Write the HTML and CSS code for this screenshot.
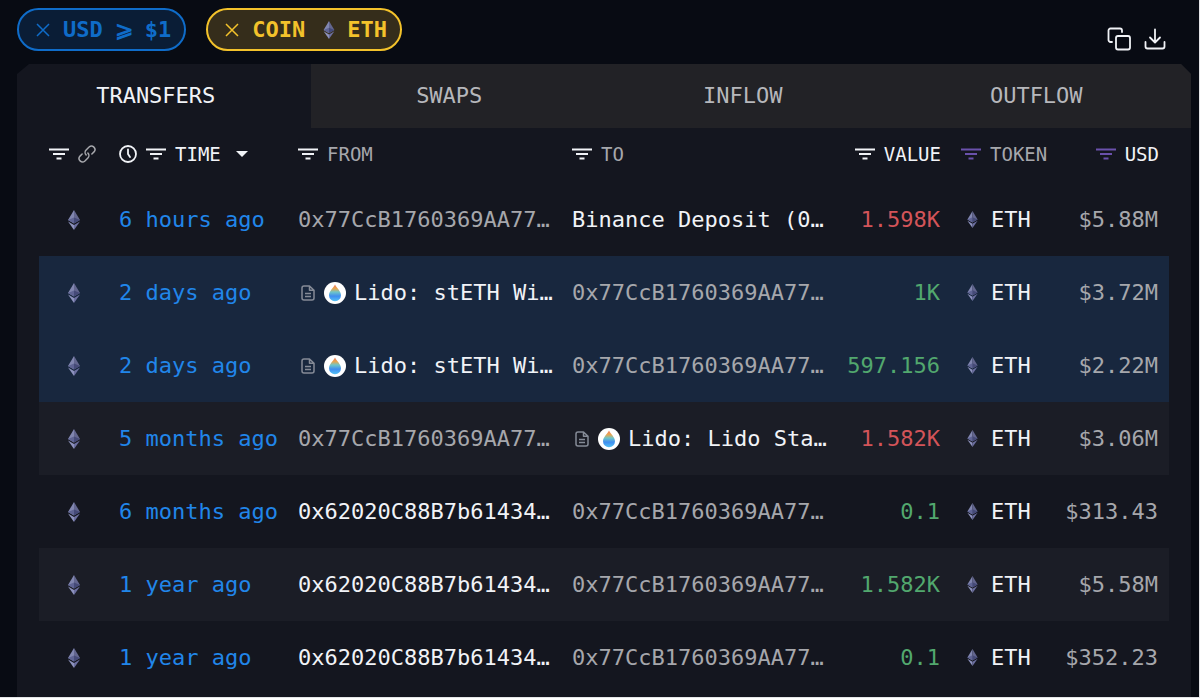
FILE: index.html
```html
<!DOCTYPE html>
<html lang="en">
<head>
  <meta charset="UTF-8">
  <meta name="viewport" content="width=device-width, initial-scale=1.0">
  <title>Transfers</title>
  <link rel="stylesheet" href="styles.css">
</head>
<body>
  <!-- shared icons -->
  <svg class="sprite" aria-hidden="true">
    <symbol id="filter" viewBox="0 0 20 12">
      <path d="M0 0.5h20v2H0zM4 5h12v2H4zM7.5 9.5h5v2h-5z" fill="currentColor"/>
    </symbol>
    <symbol id="close" viewBox="0 0 14 14">
      <path d="M1 1l12 12M13 1L1 13" stroke="currentColor" stroke-width="1.5" fill="none"/>
    </symbol>
    <symbol id="eth" viewBox="0 0 12 20">
      <path d="M6 0L0 10l6 3.600z" fill="#8186b0"/>
      <path d="M6 0l6 10-6 3.600z" fill="#63668f"/>
      <path d="M0 10l6-2.6v6.200z" fill="#5f6494"/>
      <path d="M12 10L6 7.4v6.200z" fill="#454a78"/>
      <path d="M0 11.4l6 3.6v5z" fill="#8d92bd"/>
      <path d="M12 11.4L6 15v5z" fill="#6c6fa0"/>
    </symbol>
    <symbol id="doc" viewBox="0 0 14 16">
      <path d="M8.5 1H3a2 2 0 0 0-2 2v10a2 2 0 0 0 2 2h8a2 2 0 0 0 2-2V5.2zM8.5 1v4.2H13M4 8.5h6M4 11.5h6" fill="none" stroke="currentColor" stroke-width="1.5" stroke-linejoin="round"/>
    </symbol>
    <linearGradient id="drop" x1="0" y1="0" x2="0" y2="1">
      <stop offset="0" stop-color="#f07a60"/>
      <stop offset="0.25" stop-color="#e6a650"/>
      <stop offset="0.45" stop-color="#6fc6c8"/>
      <stop offset="0.7" stop-color="#3f8df0"/>
      <stop offset="1" stop-color="#55c3f5"/>
    </linearGradient>
    <symbol id="lido" viewBox="0 0 22 22">
      <circle cx="11" cy="11" r="11" fill="#fff"/>
      <path d="M11 2.500c1.500 3.200 6 6.800 6 10.700a6 6 0 0 1-12 0C5 9.300 9.500 5.700 11 2.500z" fill="url(#drop)"/>
    </symbol>
  </svg>

  <div class="page">
    <div class="toolbar">
      <div class="chips">
        <button class="chip chip-blue" type="button">
          <svg class="icon-close"><use href="#close"/></svg>
          <span class="condition"><span>USD</span><span>⩾</span><span>$1</span></span>
        </button>
        <button class="chip chip-yellow" type="button">
          <svg class="icon-close"><use href="#close"/></svg>
          <span>COIN</span>
          <svg class="icon-coin"><use href="#eth"/></svg>
          <span>ETH</span>
        </button>
      </div>
      <div class="actions">
        <button type="button" aria-label="Copy">
          <svg width="24" height="24" viewBox="0 0 24 24" fill="none" stroke="currentColor" stroke-width="1.8" stroke-linecap="round" stroke-linejoin="round">
            <rect x="9" y="9" width="14" height="13.500" rx="2"/>
            <path d="M5 15H3.500a2 2 0 0 1-2-2V3.500a2 2 0 0 1 2-2H13a2 2 0 0 1 2 2V5"/>
          </svg>
        </button>
        <button type="button" aria-label="Download">
          <svg width="24" height="24" viewBox="0 0 24 24" fill="none" stroke="currentColor" stroke-width="1.8" stroke-linecap="round" stroke-linejoin="round">
            <path d="M2.500 15v4.500a2 2 0 0 0 2 2h15a2 2 0 0 0 2-2V15M12 2.500V15M7 10.500l5 5 5-5"/>
          </svg>
        </button>
      </div>
    </div>

    <div class="panel">
      <div class="tabs" role="tablist">
        <button class="tab active" type="button" role="tab" aria-selected="true">TRANSFERS</button>
        <button class="tab" type="button" role="tab" aria-selected="false">SWAPS</button>
        <button class="tab" type="button" role="tab" aria-selected="false">INFLOW</button>
        <button class="tab" type="button" role="tab" aria-selected="false">OUTFLOW</button>
      </div>

      <div class="table-wrap">
        <table>
          <colgroup>
            <col class="col-chain">
            <col class="col-time">
            <col>
            <col>
            <col class="col-value">
            <col class="col-token">
            <col class="col-usd">
          </colgroup>
          <thead>
            <tr>
              <th>
                <div class="head">
                  <button type="button" aria-label="Filter chain"><svg class="icon-filter"><use href="#filter"/></svg></button>
                  <svg class="muted" width="18" height="18" viewBox="0 0 24 24" fill="none" stroke="currentColor" stroke-width="2" stroke-linecap="round" stroke-linejoin="round">
                    <path d="M13.200 10.800a4.600 4.600 0 0 1 0 6.500l-4 4a4.600 4.600 0 0 1-6.500-6.500l2.800-2.800"/>
                    <path d="M10.800 13.200a4.600 4.600 0 0 1 0-6.500l4-4a4.600 4.600 0 0 1 6.500 6.500l-2.800 2.800"/>
                  </svg>
                </div>
              </th>
              <th>
                <div class="head">
                  <svg width="18" height="18" viewBox="0 0 18 18" fill="none" stroke="currentColor" stroke-width="1.8" stroke-linecap="round">
                    <circle cx="9" cy="9" r="8"/>
                    <path d="M9 4.500V9l2 3"/>
                  </svg>
                  <button type="button" aria-label="Filter time"><svg class="icon-filter"><use href="#filter"/></svg></button>
                  <button class="sort" type="button">TIME
                    <svg width="12" height="6" viewBox="0 0 12 6"><path d="M0 0h12L6 6z" fill="currentColor"/></svg>
                  </button>
                </div>
              </th>
              <th>
                <div class="head">
                  <button type="button" aria-label="Filter from"><svg class="icon-filter"><use href="#filter"/></svg></button>
                  <span class="muted">FROM</span>
                </div>
              </th>
              <th>
                <div class="head">
                  <button type="button" aria-label="Filter to"><svg class="icon-filter"><use href="#filter"/></svg></button>
                  <span class="muted">TO</span>
                </div>
              </th>
              <th>
                <div class="head right">
                  <button type="button" aria-label="Filter value"><svg class="icon-filter"><use href="#filter"/></svg></button>
                  <span>VALUE</span>
                </div>
              </th>
              <th>
                <div class="head">
                  <button class="purple" type="button" aria-label="Filter token"><svg class="icon-filter"><use href="#filter"/></svg></button>
                  <span class="muted">TOKEN</span>
                </div>
              </th>
              <th>
                <div class="head right">
                  <button class="purple" type="button" aria-label="Filter USD"><svg class="icon-filter"><use href="#filter"/></svg></button>
                  <span>USD</span>
                </div>
              </th>
            </tr>
          </thead>
          <tbody>
            <tr>
              <td class="chain"><svg class="icon-chain"><use href="#eth"/></svg></td>
              <td><a class="time" href="#">6 hours ago</a></td>
              <td><a class="muted" href="#">0x77CcB1760369AA77…</a></td>
              <td><a href="#">Binance Deposit (0…</a></td>
              <td class="value out">1.598K</td>
              <td><a class="token" href="#"><svg class="icon-token"><use href="#eth"/></svg>ETH</a></td>
              <td class="value muted">$5.88M</td>
            </tr>
            <tr class="highlight">
              <td class="chain"><svg class="icon-chain"><use href="#eth"/></svg></td>
              <td><a class="time" href="#">2 days ago</a></td>
              <td><a class="entity" href="#"><svg class="icon-doc"><use href="#doc"/></svg><svg class="icon-lido"><use href="#lido"/></svg>Lido: stETH Wi…</a></td>
              <td><a class="muted" href="#">0x77CcB1760369AA77…</a></td>
              <td class="value in">1K</td>
              <td><a class="token" href="#"><svg class="icon-token"><use href="#eth"/></svg>ETH</a></td>
              <td class="value muted">$3.72M</td>
            </tr>
            <tr class="highlight">
              <td class="chain"><svg class="icon-chain"><use href="#eth"/></svg></td>
              <td><a class="time" href="#">2 days ago</a></td>
              <td><a class="entity" href="#"><svg class="icon-doc"><use href="#doc"/></svg><svg class="icon-lido"><use href="#lido"/></svg>Lido: stETH Wi…</a></td>
              <td><a class="muted" href="#">0x77CcB1760369AA77…</a></td>
              <td class="value in">597.156</td>
              <td><a class="token" href="#"><svg class="icon-token"><use href="#eth"/></svg>ETH</a></td>
              <td class="value muted">$2.22M</td>
            </tr>
            <tr class="stripe">
              <td class="chain"><svg class="icon-chain"><use href="#eth"/></svg></td>
              <td><a class="time" href="#">5 months ago</a></td>
              <td><a class="muted" href="#">0x77CcB1760369AA77…</a></td>
              <td><a class="entity" href="#"><svg class="icon-doc"><use href="#doc"/></svg><svg class="icon-lido"><use href="#lido"/></svg>Lido: Lido Sta…</a></td>
              <td class="value out">1.582K</td>
              <td><a class="token" href="#"><svg class="icon-token"><use href="#eth"/></svg>ETH</a></td>
              <td class="value muted">$3.06M</td>
            </tr>
            <tr>
              <td class="chain"><svg class="icon-chain"><use href="#eth"/></svg></td>
              <td><a class="time" href="#">6 months ago</a></td>
              <td><a href="#">0x62020C88B7b61434…</a></td>
              <td><a class="muted" href="#">0x77CcB1760369AA77…</a></td>
              <td class="value in">0.1</td>
              <td><a class="token" href="#"><svg class="icon-token"><use href="#eth"/></svg>ETH</a></td>
              <td class="value muted">$313.43</td>
            </tr>
            <tr class="stripe">
              <td class="chain"><svg class="icon-chain"><use href="#eth"/></svg></td>
              <td><a class="time" href="#">1 year ago</a></td>
              <td><a href="#">0x62020C88B7b61434…</a></td>
              <td><a class="muted" href="#">0x77CcB1760369AA77…</a></td>
              <td class="value in">1.582K</td>
              <td><a class="token" href="#"><svg class="icon-token"><use href="#eth"/></svg>ETH</a></td>
              <td class="value muted">$5.58M</td>
            </tr>
            <tr>
              <td class="chain"><svg class="icon-chain"><use href="#eth"/></svg></td>
              <td><a class="time" href="#">1 year ago</a></td>
              <td><a href="#">0x62020C88B7b61434…</a></td>
              <td><a class="muted" href="#">0x77CcB1760369AA77…</a></td>
              <td class="value in">0.1</td>
              <td><a class="token" href="#"><svg class="icon-token"><use href="#eth"/></svg>ETH</a></td>
              <td class="value muted">$352.23</td>
            </tr>
          </tbody>
        </table>
      </div>
    </div>
  </div>
</body>
</html>
```
FILE: styles.css
```css
* {
  box-sizing: border-box;
}

body {
  margin: 0;
  background: #080b13;
  color: #f1f3f7;
  font-family: "DejaVu Sans Mono", "Liberation Mono", monospace;
  font-size: 22px;
  line-height: 28px;
}

button {
  margin: 0;
  padding: 0;
  border: none;
  background: none;
  color: inherit;
  font: inherit;
  cursor: pointer;
}

a {
  color: inherit;
  text-decoration: none;
}

a:hover {
  text-decoration: underline;
}

svg {
  display: block;
  flex-shrink: 0;
}

.sprite {
  position: absolute;
  width: 0;
  height: 0;
}

.page {
  display: flex;
  flex-direction: column;
  min-height: 100vh;
  padding: 8px 8px 0 17px;
  border-right: 1px solid #e4e5e8;
  border-bottom: 1px solid #e4e5e8;
}

.toolbar {
  display: flex;
  justify-content: space-between;
  align-items: flex-end;
  margin-bottom: 13px;
}

.chips {
  display: flex;
  gap: 20px;
}

.chip {
  display: flex;
  align-items: center;
  height: 43px;
  padding: 0 13px 0 17px;
  border: 2px solid;
  border-radius: 22px;
  font-weight: bold;
}

.chip-blue {
  color: #0f6cc9;
  background: #0a1d36;
}

.chip-yellow {
  color: #f3c22b;
  background: #352d1b;
}

.condition {
  display: flex;
  gap: 12px;
}

.icon-close {
  width: 14px;
  height: 14px;
  margin-right: 13px;
}

.icon-coin {
  width: 12px;
  height: 18px;
  margin: 0 12px 0 18px;
}

.actions {
  display: flex;
  gap: 12px;
  margin-right: 24px;
}

.panel {
  flex: 1;
  background: #14161f;
  clip-path: polygon(12px 0, calc(100% - 10px) 0, 100% 10px, 100% 100%, 0 100%, 0 10px);
}

.tabs {
  display: flex;
}

.tab {
  flex: 1;
  height: 64px;
  padding-right: 16px;
  background: #222226;
  color: #b6b7bb;
}

.tab.active {
  background: none;
  color: #f1f3f7;
}

.table-wrap {
  padding: 0 22px;
}

table {
  width: 100%;
  table-layout: fixed;
  border-collapse: collapse;
}

.col-chain {
  width: 70px;
}

.col-time {
  width: 179px;
}

.col-value {
  width: 115px;
}

.col-token {
  width: 100px;
}

.col-usd {
  width: 118px;
}

th {
  height: 55px;
  padding: 0 0 4px 10px;
  font-size: 19px;
  font-weight: normal;
  text-align: left;
}

td {
  height: 73px;
  padding: 0 0 0 10px;
  white-space: nowrap;
}

.head {
  display: flex;
  align-items: center;
  gap: 9px;
}

.head.right {
  justify-content: flex-end;
  padding-right: 10px;
}

.sort {
  display: flex;
  align-items: center;
  gap: 15px;
}

.icon-filter {
  width: 20px;
  height: 12px;
}

.muted {
  color: #a6a7ac;
}

.purple {
  color: #6a51ac;
}

.highlight {
  background: #18273e;
}

.stripe {
  background: #1b1d26;
}

.chain {
  padding: 0;
}

.icon-chain {
  width: 12px;
  height: 20px;
  margin: 0 auto;
}

.time {
  color: #2186ea;
}

.entity,
.token {
  display: flex;
  align-items: center;
}

.token {
  padding-left: 6px;
}

.icon-token {
  width: 11px;
  height: 17px;
  margin-right: 13px;
}

.icon-doc {
  width: 14px;
  height: 16px;
  margin: 0 9px 0 3px;
  color: #858b97;
}

.icon-lido {
  width: 22px;
  height: 22px;
  margin-right: 8px;
}

.value {
  padding: 0 11px 0 0;
  text-align: right;
}

.out {
  color: #d35459;
}

.in {
  color: #52a86e;
}
```
